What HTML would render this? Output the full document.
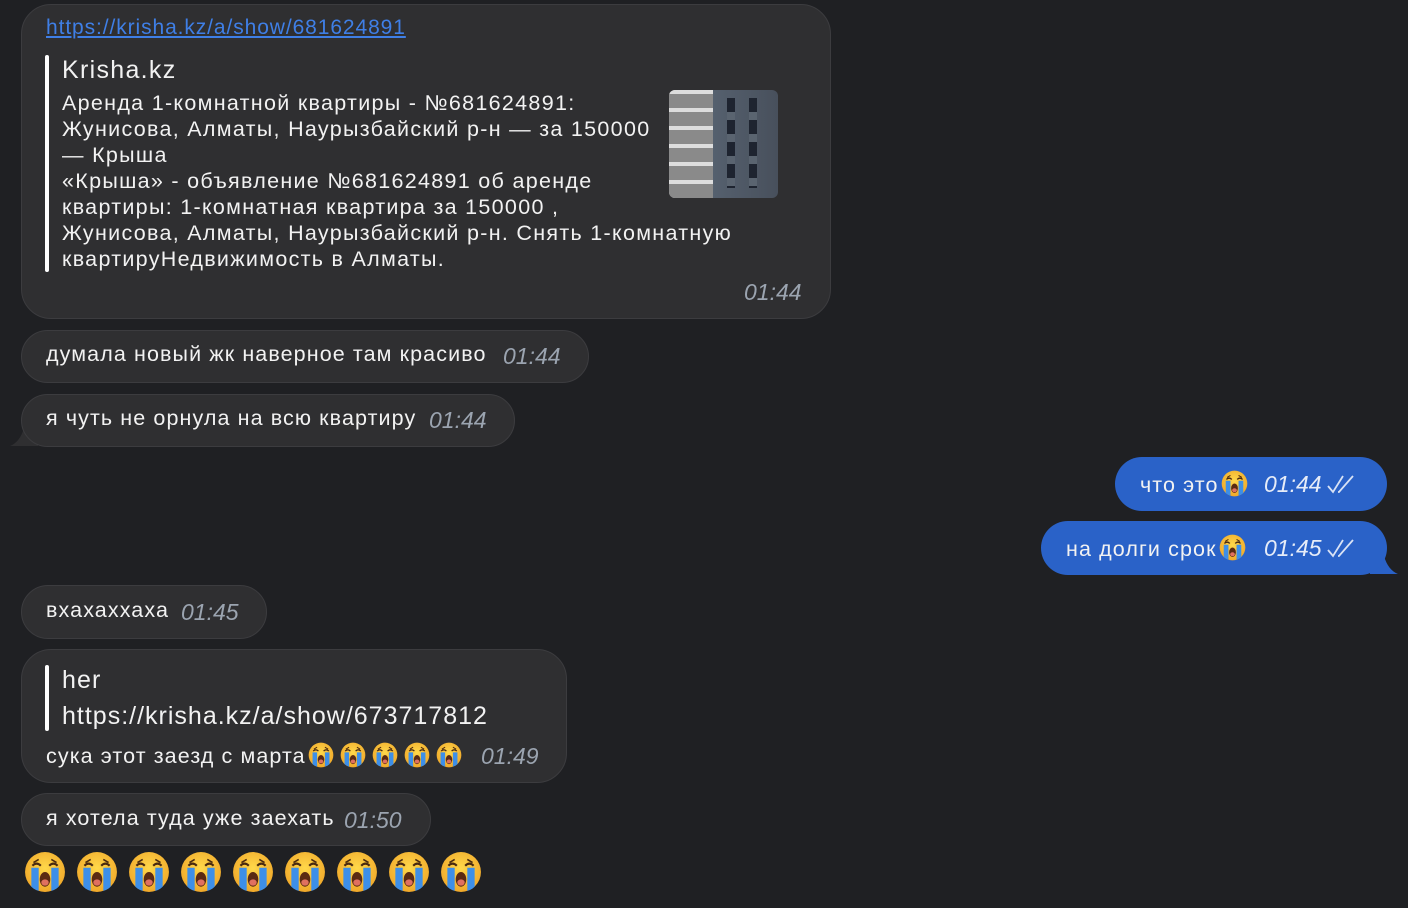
<!DOCTYPE html>
<html><head><meta charset="utf-8"><style>
body{margin:0;width:1408px;height:908px;background:#1f2023;overflow:hidden;font-family:"Liberation Sans","DejaVu Sans",sans-serif;color:#f2f2f2;position:relative}
.b{position:absolute;background:#2f2f31;border:1px solid #3c3c3f;border-radius:27px;box-sizing:border-box}
.blue{position:absolute;background:#2a62c8;border-radius:27px;box-sizing:border-box}
.t{position:absolute;font-size:21.5px;letter-spacing:1.1px;white-space:nowrap}
.tm{position:absolute;font-size:23px;font-style:italic;color:#9ba4b0;white-space:nowrap}
.tw{color:#e6ecf8}
svg.e{position:absolute}
svg.i{vertical-align:-5px;margin-left:2px}
</style></head><body>
<svg width="0" height="0" style="position:absolute"><defs>
<radialGradient id="g" cx="50%" cy="40%" r="60%"><stop offset="0" stop-color="#ffd84a"/><stop offset="1" stop-color="#f0a82a"/></radialGradient>
<symbol id="em" viewBox="0 0 40 40">
<circle cx="20" cy="20" r="19" fill="url(#g)"/>
<path d="M8 14q4-4 8 0M24 14q4-4 8 0" stroke="#4a2a10" stroke-width="2" fill="none"/>
<path d="M9 11l5-3M31 11l-5-3" stroke="#4a2a10" stroke-width="1.5"/>
<ellipse cx="20" cy="27" rx="5" ry="7" fill="#5a2a12"/>
<ellipse cx="20" cy="30" rx="3.5" ry="3" fill="#e07060"/>
<path d="M7 16h7v22q-4-1-7-4z" fill="#3d8fe8"/><path d="M26 16h7v18q-3 3-7 4z" fill="#3d8fe8"/>
</symbol></defs></svg>

<div class="b" style="left:21px;top:4px;width:810px;height:315px;border-radius:30px"></div>
<div class="t" style="left:46px;top:16px;color:#3f7fe6;text-decoration:underline;font-size:21px;letter-spacing:0.9px">https://krisha.kz/a/show/681624891</div>
<div style="position:absolute;left:45px;top:55px;width:4px;height:217px;background:#fff;border-radius:2px"></div>
<div class="t" style="left:62px;top:56px;font-size:25px;letter-spacing:1.3px">Krisha.kz</div>
<div class="t" style="left:62px;top:90px;line-height:26px;font-size:21.5px;letter-spacing:1.3px">Аренда 1-комнатной квартиры - №681624891:<br>Жунисова, Алматы, Наурызбайский р-н — за 150000<br>— Крыша<br>«Крыша» - объявление №681624891 об аренде<br>квартиры: 1-комнатная квартира за 150000 ,<br>Жунисова, Алматы, Наурызбайский р-н. Снять 1-комнатную<br>квартируНедвижимость в Алматы.</div>
<div style="position:absolute;left:669px;top:90px;width:109px;height:108px;border-radius:6px;background:linear-gradient(90deg,#c8c8c8 0,#b8bcc0 35%,#55606e 40%,#48505c 100%);overflow:hidden">
<div style="position:absolute;left:0;top:0;width:44px;height:108px;background:repeating-linear-gradient(180deg,#ddd 0,#ddd 4px,#8a8a8a 4px,#8a8a8a 18px)"></div>
<div style="position:absolute;left:58px;top:8px;width:8px;height:90px;background:repeating-linear-gradient(180deg,#1e2430 0,#1e2430 14px,#5a6470 14px,#5a6470 22px)"></div>
<div style="position:absolute;left:80px;top:8px;width:8px;height:90px;background:repeating-linear-gradient(180deg,#1e2430 0,#1e2430 14px,#5a6470 14px,#5a6470 22px)"></div>
</div>
<div class="tm" style="left:744px;top:279px">01:44</div>

<div class="b" style="left:21px;top:330px;width:568px;height:53px"></div>
<div class="t" style="left:46px;top:342px">думала новый жк наверное там красиво</div>
<div class="tm" style="left:503px;top:343px">01:44</div>

<svg class="e" style="left:8px;top:424px" width="30" height="24"><path d="M30 0v22H2q10-4 14-18z" fill="#2f2f31"/></svg>
<div class="b" style="left:21px;top:394px;width:494px;height:53px"></div>
<div class="t" style="left:46px;top:406px">я чуть не орнула на всю квартиру</div>
<div class="tm" style="left:429px;top:407px">01:44</div>

<div class="blue" style="left:1115px;top:457px;width:272px;height:54px"></div>
<div class="t" style="left:1140px;top:470px">что это<svg class="i" width="27" height="27"><use href="#em"/></svg></div>
<div class="tm tw" style="left:1264px;top:471px">01:44</div>
<svg class="e" style="left:1326px;top:474px" width="34" height="20"><path d="M2 12l5 6 10-16M12 18l1 0 14-16" stroke="#d8e2f5" stroke-width="1.8" fill="none"/></svg>

<svg class="e" style="left:1370px;top:552px" width="30" height="24"><path d="M0 0v22h28q-10-4-14-18z" fill="#2a62c8"/></svg>
<div class="blue" style="left:1041px;top:521px;width:346px;height:54px"></div>
<div class="t" style="left:1066px;top:534px">на долги срок<svg class="i" width="27" height="27"><use href="#em"/></svg></div>
<div class="tm tw" style="left:1264px;top:535px">01:45</div>
<svg class="e" style="left:1326px;top:538px" width="34" height="20"><path d="M2 12l5 6 10-16M12 18l1 0 14-16" stroke="#d8e2f5" stroke-width="1.8" fill="none"/></svg>

<div class="b" style="left:21px;top:585px;width:246px;height:54px"></div>
<div class="t" style="left:46px;top:598px">вхахаххаха</div>
<div class="tm" style="left:181px;top:599px">01:45</div>

<div class="b" style="left:21px;top:649px;width:546px;height:134px;border-radius:30px"></div>
<div style="position:absolute;left:45px;top:665px;width:4px;height:66px;background:#fff;border-radius:2px"></div>
<div class="t" style="left:62px;top:666px;font-size:25px;letter-spacing:1.1px">her</div>
<div class="t" style="left:62px;top:702px;font-size:25px;letter-spacing:1px">https://krisha.kz/a/show/673717812</div>
<div class="t" style="left:46px;top:742px">сука этот заезд с марта<svg class="i" width="26" height="26"><use href="#em"/></svg><svg class="i" style="margin-left:6px" width="26" height="26"><use href="#em"/></svg><svg class="i" style="margin-left:6px" width="26" height="26"><use href="#em"/></svg><svg class="i" style="margin-left:6px" width="26" height="26"><use href="#em"/></svg><svg class="i" style="margin-left:6px" width="26" height="26"><use href="#em"/></svg></div>
<div class="tm" style="left:481px;top:743px">01:49</div>

<div class="b" style="left:21px;top:793px;width:410px;height:53px"></div>
<div class="t" style="left:46px;top:806px">я хотела туда уже заехать</div>
<div class="tm" style="left:344px;top:807px">01:50</div>

<svg class="e" style="left:24px;top:851px" width="42" height="42"><use href="#em"/></svg>
<svg class="e" style="left:76px;top:851px" width="42" height="42"><use href="#em"/></svg>
<svg class="e" style="left:128px;top:851px" width="42" height="42"><use href="#em"/></svg>
<svg class="e" style="left:180px;top:851px" width="42" height="42"><use href="#em"/></svg>
<svg class="e" style="left:232px;top:851px" width="42" height="42"><use href="#em"/></svg>
<svg class="e" style="left:284px;top:851px" width="42" height="42"><use href="#em"/></svg>
<svg class="e" style="left:336px;top:851px" width="42" height="42"><use href="#em"/></svg>
<svg class="e" style="left:388px;top:851px" width="42" height="42"><use href="#em"/></svg>
<svg class="e" style="left:440px;top:851px" width="42" height="42"><use href="#em"/></svg>
</body></html>
